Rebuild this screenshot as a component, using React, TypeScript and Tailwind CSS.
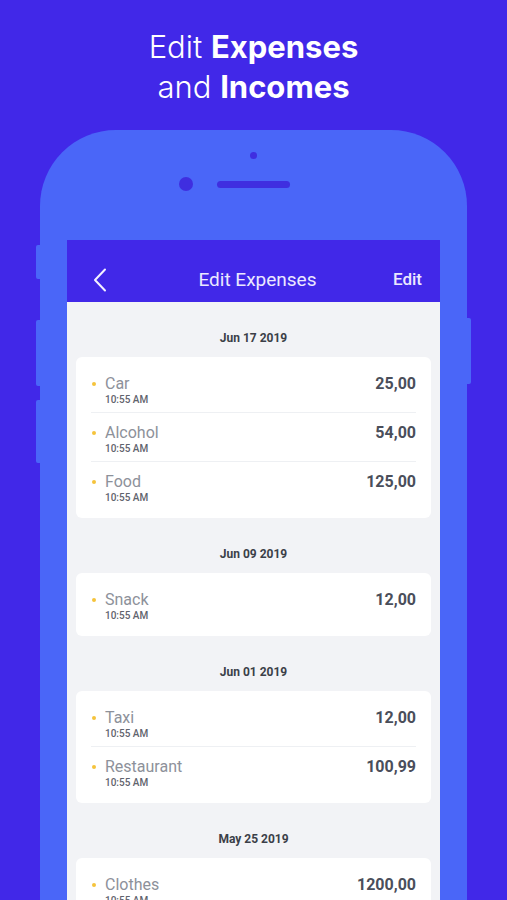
const days = [
  {
    date: "Jun 17 2019",
    items: [
      { name: "Car", amount: "25,00" },
      { name: "Alcohol", amount: "54,00" },
      { name: "Food", amount: "125,00" },
    ],
  },
  { date: "Jun 09 2019", items: [{ name: "Snack", amount: "12,00" }] },
  {
    date: "Jun 01 2019",
    items: [
      { name: "Taxi", amount: "12,00" },
      { name: "Restaurant", amount: "100,99" },
    ],
  },
  { date: "May 25 2019", items: [{ name: "Clothes", amount: "1200,00" }] },
];

function Row({ name, amount, last }: { name: string; amount: string; last: boolean }) {
  return (
    <div className="px-[15px]">
      <div className={`flex justify-between h-[49px] pt-[10px] ${last ? "" : "border-b border-[#eef0f3]"}`}>
        <div className="flex">
          <div className="w-[4px] h-[4px] rounded-full bg-[#f5c33b] mt-[8px] ml-[1px] mr-[9px]" />
          <div className="flex flex-col">
            <span className="text-[16px] leading-[20px] text-[#8d919a]">{name}</span>
            <span className="text-[10px] leading-[12px] font-medium text-[#5f636d]">10:55 AM</span>
          </div>
        </div>
        <span className="text-[16px] leading-[20px] font-bold text-[#4a4e5a]">{amount}</span>
      </div>
    </div>
  );
}

export default function App() {
  return (
    <div className="h-[900px] w-full overflow-hidden bg-[#4128e8] flex flex-col items-center">
      {/* heading */}
      <div
        className="pt-[27px] text-center text-white text-[31px] leading-[40px]"
        style={{ fontFamily: "Inter, 'Noto Sans', sans-serif" }}
      >
        <div>
          <span className="font-light">Edit </span>
          <span className="font-bold">Expenses</span>
        </div>
        <div>
          <span className="font-light">and </span>
          <span className="font-bold">Incomes</span>
        </div>
      </div>

      {/* phone */}
      <div className="relative mt-[23px] w-[427px] flex-1 bg-[#4a66f8] rounded-t-[76px] px-[27px] flex flex-col items-center">
        <div className="absolute left-[-4px] top-[115px] w-[4px] h-[34px] rounded-l-[2px] bg-[#4a66f8]" />
        <div className="absolute left-[-4px] top-[190px] w-[4px] h-[66px] rounded-l-[2px] bg-[#4a66f8]" />
        <div className="absolute left-[-4px] top-[270px] w-[4px] h-[63px] rounded-l-[2px] bg-[#4a66f8]" />
        <div className="absolute right-[-4px] top-[188px] w-[4px] h-[66px] rounded-r-[2px] bg-[#4a66f8]" />

        <div className="mt-[22px] w-[7px] h-[7px] rounded-full bg-[#3f2ee0]" />
        <div className="mt-[18px] flex items-center gap-[24px]">
          <div className="w-[14px] h-[14px] rounded-full bg-[#3f2ee0]" />
          <div className="w-[73px] h-[7px] rounded-full bg-[#3f2ee0]" />
          <div className="w-[14px] h-[14px]" />
        </div>

        {/* screen */}
        <div
          className="mt-[49px] w-full flex-1 bg-[#f2f3f6]"
          style={{ fontFamily: "Roboto, 'Liberation Sans', sans-serif" }}
        >
          <div className="h-[62px] bg-[#4128e8] flex items-center pt-[18px] px-[26px]">
            <div className="w-[50px]">
              <svg width="14" height="24" viewBox="0 0 14 24" fill="none">
                <path d="M12 1.5 L2 12 L12 22.5" stroke="#f3f1ff" strokeWidth="2" strokeLinecap="round" strokeLinejoin="round" />
              </svg>
            </div>
            <span className="flex-1 text-center text-[19px] text-[#ebe8ff]">Edit Expenses</span>
            <span className="w-[50px] text-right text-[17px] font-medium text-[#ebe8ff] mr-[-8px] pl-[8px]">Edit</span>
          </div>

          <div className="px-[9px]">
            {days.map((d) => (
              <div key={d.date}>
                <div className="pt-[29px] pb-[12px] text-center text-[12px] leading-[14px] font-bold text-[#3b3f48]">
                  {d.date}
                </div>
                <div className="bg-white rounded-[6px] pt-[7px] pb-[7px]">
                  {d.items.map((it, i) => (
                    <Row key={it.name} name={it.name} amount={it.amount} last={i === d.items.length - 1} />
                  ))}
                </div>
              </div>
            ))}
          </div>
        </div>
      </div>
    </div>
  );
}
